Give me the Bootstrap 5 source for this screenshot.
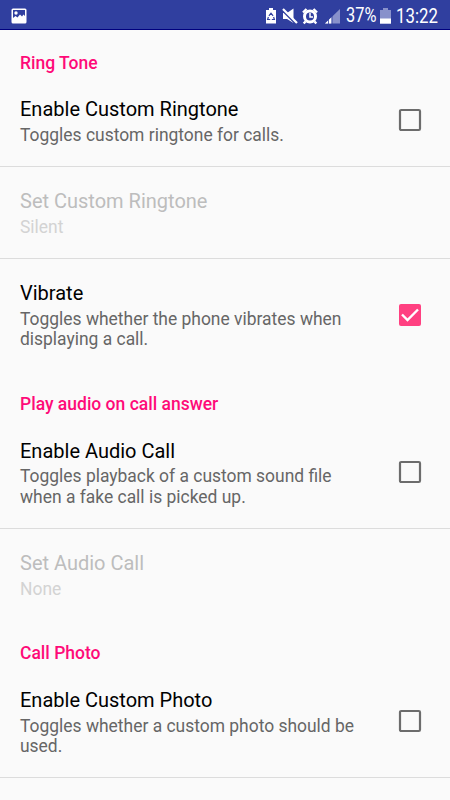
<!DOCTYPE html>
<html lang="en">
<head>
<meta charset="utf-8">
<meta name="viewport" content="width=device-width, initial-scale=1">
<title>Call settings</title>
<link href="https://cdn.jsdelivr.net/npm/bootstrap@5.3.0/dist/css/bootstrap.min.css" rel="stylesheet">
<style>
body { background: #fafafa; font-family: Roboto, "Liberation Sans", sans-serif; height: 800px; }
.status-bar { height: 30px; background: #303f9f; border-bottom: 1px solid #00007e; padding: 2px 12px 0 11px; line-height: 28px; }
.status-bar svg { display: block; flex: none; }
.battery-text { width: 30px; margin-left: 5px; font-size: 19.5px; transform: scaleX(.84); transform-origin: left; white-space: nowrap; }
.clock { width: 42px; font-size: 20px; transform: scaleX(.84); transform-origin: left; margin-left: 5px; white-space: nowrap; }
.category { height: 44.65px; padding: 22.5px 20px 0; font-size: 17.5px; line-height: 21px; font-weight: 500; color: #ff0a78; }
.pref { min-height: 92px; padding: 22.5px 28px 10px 20px; border: 0; border-radius: 0; background: transparent; }
.pref.two-line { min-height: 112.75px; }
.list-group .pref.divided { border-bottom: 1px solid #dcdcdc; }
.pref-title { font-size: 20px; line-height: 24px; color: #000; }
.pref-summary { font-size: 17.45px; line-height: 20.6px; color: #666; margin-top: 3.6px; white-space: nowrap; }
.off .pref-title { color: #bdbdbd; }
.off .pref-summary { color: #d3d3d3; }
.tick { margin: -13px 0 0; }
</style>
<script src="https://cdn.jsdelivr.net/npm/bootstrap@5.3.0/dist/js/bootstrap.bundle.min.js"></script>
</head>
<body class="overflow-hidden">
<header class="status-bar d-flex align-items-center text-white">
  <svg width="16" height="16" viewBox="0 0 16 16"><rect x=".5" y=".5" width="15" height="15" rx="1.5" fill="#fff"/><path d="M2 2h12v6l-1.500-1.500L11 8.500 9 6.500 6.500 9.500 4.500 8 2 10z" fill="#303f9f"/><circle cx="5" cy="5" r="1.700" fill="#fff"/></svg>
  <div class="d-flex align-items-center ms-auto">
    <svg width="76" height="18" viewBox="0 0 76 18">
      <path d="M1 3h3V1h4v2h3v13.500H1z" fill="#fff"/>
      <path d="M3.900 8.800 6 6.200l2.100 2.600M8.600 10l.8 2.500H6.800M5.200 12.500H2.600l.8-2.500" fill="none" stroke="#303f9f" stroke-width="1.200"/>
      <path d="M18 6h4L28.500 1.500v14.500L22 12h-4z" fill="#fff"/>
      <path d="M18.500 4 31 16.500" stroke="#303f9f" stroke-width="2.500"/><path d="M18 2 32 16" stroke="#fff" stroke-width="2.200"/>
      <circle cx="45" cy="9.500" r="5.500" fill="none" stroke="#fff" stroke-width="3"/>
      <path d="M38 5.500 41.500 2M52 5.500 48.500 2M40.500 14.500l-1.800 2M49.500 14.500l1.800 2" stroke="#fff" stroke-width="2.400"/>
      <path d="M45 6v4h3" fill="none" stroke="#fff" stroke-width="1.500"/>
      <path d="M75 2v14.500H60z" fill="#8891cb"/><path d="M66.500 10.200v6.300H60z" fill="#fff"/>
      <path d="M63.500 11v6M67 8v9" stroke="#303f9f" stroke-width=".8"/>
    </svg>
    <span class="battery-text">37%</span>
    <svg class="ms-1" width="11" height="16" viewBox="0 0 11 16"><path d="M0 2h3V0h5v2h3v14H0z" fill="#8891cb"/><path d="M0 10.500h11v5H0z" fill="#fff"/></svg>
    <span class="clock">13:22</span>
  </div>
</header>
<svg class="d-none">
  <symbol id="box-empty" viewBox="0 0 24 24"><rect x="2" y="2" width="20" height="20" rx="1.200" fill="none" stroke="#6c6c6c" stroke-width="2.200"/></symbol>
  <symbol id="box-checked" viewBox="0 0 24 24"><rect x="1" y="1" width="22" height="22" rx="2" fill="#ff4081"/><path d="M4 11.500 9.500 17 20 6.500" fill="none" stroke="#fff" stroke-width="2.400"/></symbol>
</svg>
<main>
  <h2 class="category m-0">Ring Tone</h2>
  <div class="list-group list-group-flush">
    <div class="list-group-item pref divided d-flex justify-content-between">
      <div><div class="pref-title">Enable Custom Ringtone</div><div class="pref-summary">Toggles custom ringtone for calls.</div></div>
      <svg class="tick align-self-center" width="24" height="24"><use href="#box-empty"/></svg>
    </div>
    <div class="list-group-item pref divided off">
      <div class="pref-title">Set Custom Ringtone</div><div class="pref-summary">Silent</div>
    </div>
    <div class="list-group-item pref two-line d-flex justify-content-between">
      <div><div class="pref-title">Vibrate</div><div class="pref-summary">Toggles whether the phone vibrates when<br>displaying a call.</div></div>
      <svg class="tick align-self-center" width="24" height="24"><use href="#box-checked"/></svg>
    </div>
  </div>
  <h2 class="category m-0">Play audio on call answer</h2>
  <div class="list-group list-group-flush">
    <div class="list-group-item pref two-line divided d-flex justify-content-between">
      <div><div class="pref-title">Enable Audio Call</div><div class="pref-summary">Toggles playback of a custom sound file<br>when a fake call is picked up.</div></div>
      <svg class="tick align-self-center" width="24" height="24"><use href="#box-empty"/></svg>
    </div>
    <div class="list-group-item pref off">
      <div class="pref-title">Set Audio Call</div><div class="pref-summary">None</div>
    </div>
  </div>
  <h2 class="category m-0">Call Photo</h2>
  <div class="list-group list-group-flush">
    <div class="list-group-item pref two-line divided d-flex justify-content-between">
      <div><div class="pref-title">Enable Custom Photo</div><div class="pref-summary">Toggles whether a custom photo should be<br>used.</div></div>
      <svg class="tick align-self-center" width="24" height="24"><use href="#box-empty"/></svg>
    </div>
  </div>
</main>
</body>
</html>
